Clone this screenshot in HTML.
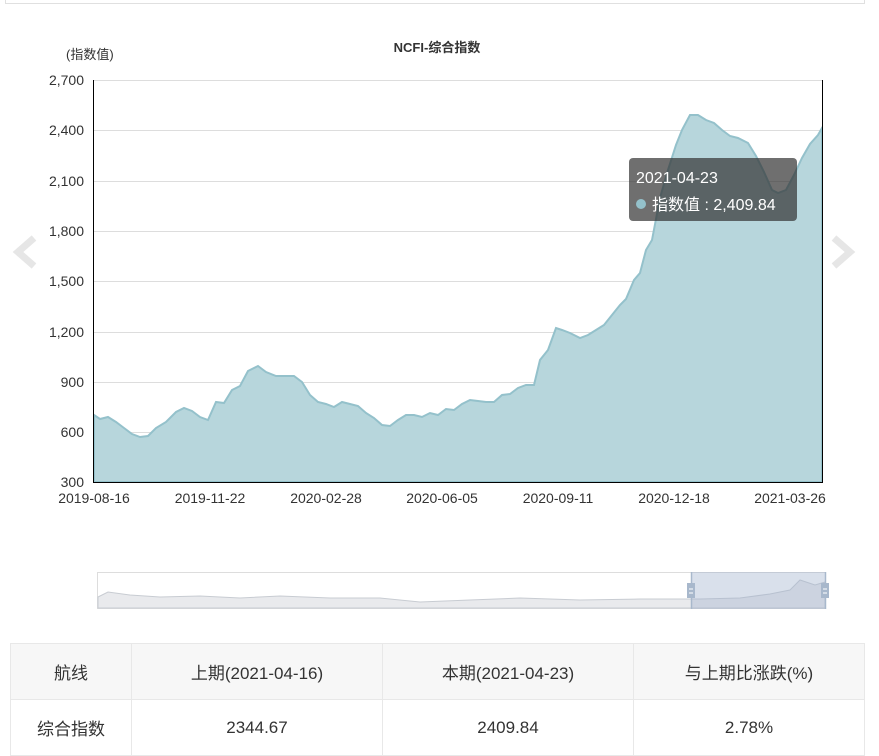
<!DOCTYPE html>
<html><head><meta charset="utf-8"><style>
body{margin:0;width:879px;height:748px;background:#fff;overflow:hidden;font-family:"Liberation Sans","Noto Sans CJK SC",sans-serif;position:relative}
table{position:absolute;left:10px;top:643px;border-collapse:collapse;width:855px;font-size:17px;color:#333}
td{border:1px solid #e8e8e8;text-align:center;height:55px;padding:0}
tr.h td{background:#f7f7f7}
</style></head><body>
<div style="position:absolute;left:5px;top:-2px;width:858px;height:5px;border:1px solid #e0e0e0;border-top:none"></div>
<svg width="879" height="640" style="position:absolute;left:0;top:0" font-family="Liberation Sans, Noto Sans CJK SC, sans-serif">
<text x="66" y="59" font-size="13" fill="#333">(指数值)</text>
<text x="437" y="52" font-size="13" font-weight="bold" fill="#333" text-anchor="middle">NCFI-综合指数</text>
<g stroke="#ddd" stroke-width="1">
<line x1="94" x2="822" y1="80.5" y2="80.5"/><line x1="94" x2="822" y1="130.5" y2="130.5"/><line x1="94" x2="822" y1="181.5" y2="181.5"/><line x1="94" x2="822" y1="231.5" y2="231.5"/><line x1="94" x2="822" y1="281.5" y2="281.5"/><line x1="94" x2="822" y1="332.5" y2="332.5"/><line x1="94" x2="822" y1="382.5" y2="382.5"/><line x1="94" x2="822" y1="432.5" y2="432.5"/>
</g>
<g font-size="14" fill="#333" text-anchor="end">
<text x="84" y="85">2,700</text><text x="84" y="135">2,400</text><text x="84" y="186">2,100</text><text x="84" y="236">1,800</text><text x="84" y="286">1,500</text><text x="84" y="337">1,200</text><text x="84" y="387">900</text><text x="84" y="437">600</text><text x="84" y="487">300</text>
</g>
<g font-size="14" fill="#333" text-anchor="middle">
<text x="94" y="503">2019-08-16</text><text x="210" y="503">2019-11-22</text><text x="326" y="503">2020-02-28</text><text x="442" y="503">2020-06-05</text><text x="558" y="503">2020-09-11</text><text x="674" y="503">2020-12-18</text><text x="790" y="503">2021-03-26</text>
</g>
<path fill="#b7d6dc" stroke="#94c1cb" stroke-width="2" d="M94,415 L100,419 108,417 116,422 124,428 132,434 140,437 148,436 156,428 166,422 176,412 184,408 192,411 200,417 208,420 216,402 224,403 232,390 240,386 248,371 258,366 266,372 276,376 286,376 294,376 302,382 310,395 318,402 326,404 334,407 342,402 350,404 358,406 366,413 374,418 382,425 390,426 398,420 406,415 414,415 422,417 430,413 438,415 446,409 454,410 462,404 470,400 478,401 486,402 494,402 502,395 510,394 518,388 526,385 534,385 540,360 548,350 556,328 562,330 570,333 580,338 588,335 596,330 604,325 612,315 620,305 626,299 634,280 640,273 646,250 652,240 660,198 668,170 676,145 682,130 690,115 698,115 706,120 714,123 722,130 730,136 738,138 748,143 756,156 764,172 772,190 778,193 786,190 794,175 802,158 810,144 818,135 822,128 L822,482 L94,482 Z"/>
<line x1="93.5" y1="80" x2="93.5" y2="482" stroke="#000"/>
<line x1="822.5" y1="80" x2="822.5" y2="482" stroke="#000"/>
<line x1="93" y1="482.5" x2="823" y2="482.5" stroke="#000"/>
<rect x="629" y="158" width="168" height="63" rx="4" fill="rgba(50,50,50,0.7)"/>
<text x="636" y="183" font-size="16" fill="#fff">2021-04-23</text>
<circle cx="641" cy="204" r="5" fill="#94c1cb"/>
<text x="652" y="210" font-size="16" fill="#fff">指数值 : 2,409.84</text>
<path d="M34,238 L18,252 L34,266" fill="none" stroke="#e6e6e6" stroke-width="7"/>
<path d="M834,238 L850,252 L834,266" fill="none" stroke="#e6e6e6" stroke-width="7"/>
<rect x="97.5" y="572.5" width="728" height="36" fill="#fff" stroke="#ddd"/>
<path fill="#e9eaed" stroke="#c8ccd2" stroke-width="1" d="M98,597 L108,592 130,595 160,597 200,596 240,598 280,596 330,598 380,598 420,602 470,600 520,598 580,600 640,599 700,599 740,598 770,594 790,590 800,580 815,585 825,582 L825,608 L98,608 Z"/>
<rect x="691" y="572" width="134" height="37" fill="rgba(160,178,205,0.4)"/>
<line x1="691.5" y1="572" x2="691.5" y2="609" stroke="#a8b8cc" stroke-width="1.5"/>
<line x1="825.5" y1="572" x2="825.5" y2="609" stroke="#a8b8cc" stroke-width="1.5"/>
<rect x="687" y="583" width="8" height="15" fill="#a8b8cc"/><rect x="821" y="583" width="8" height="15" fill="#a8b8cc"/>
<line x1="689" y1="589" x2="693" y2="589" stroke="#fff"/><line x1="689" y1="593" x2="693" y2="593" stroke="#fff"/>
<line x1="823" y1="589" x2="827" y2="589" stroke="#fff"/><line x1="823" y1="593" x2="827" y2="593" stroke="#fff"/>
</svg>
<table>
<tr class="h"><td style="width:120px">航线</td><td style="width:250px">上期(2021-04-16)</td><td style="width:250px">本期(2021-04-23)</td><td>与上期比涨跌(%)</td></tr>
<tr><td>综合指数</td><td>2344.67</td><td>2409.84</td><td>2.78%</td></tr>
</table>
</body></html>
